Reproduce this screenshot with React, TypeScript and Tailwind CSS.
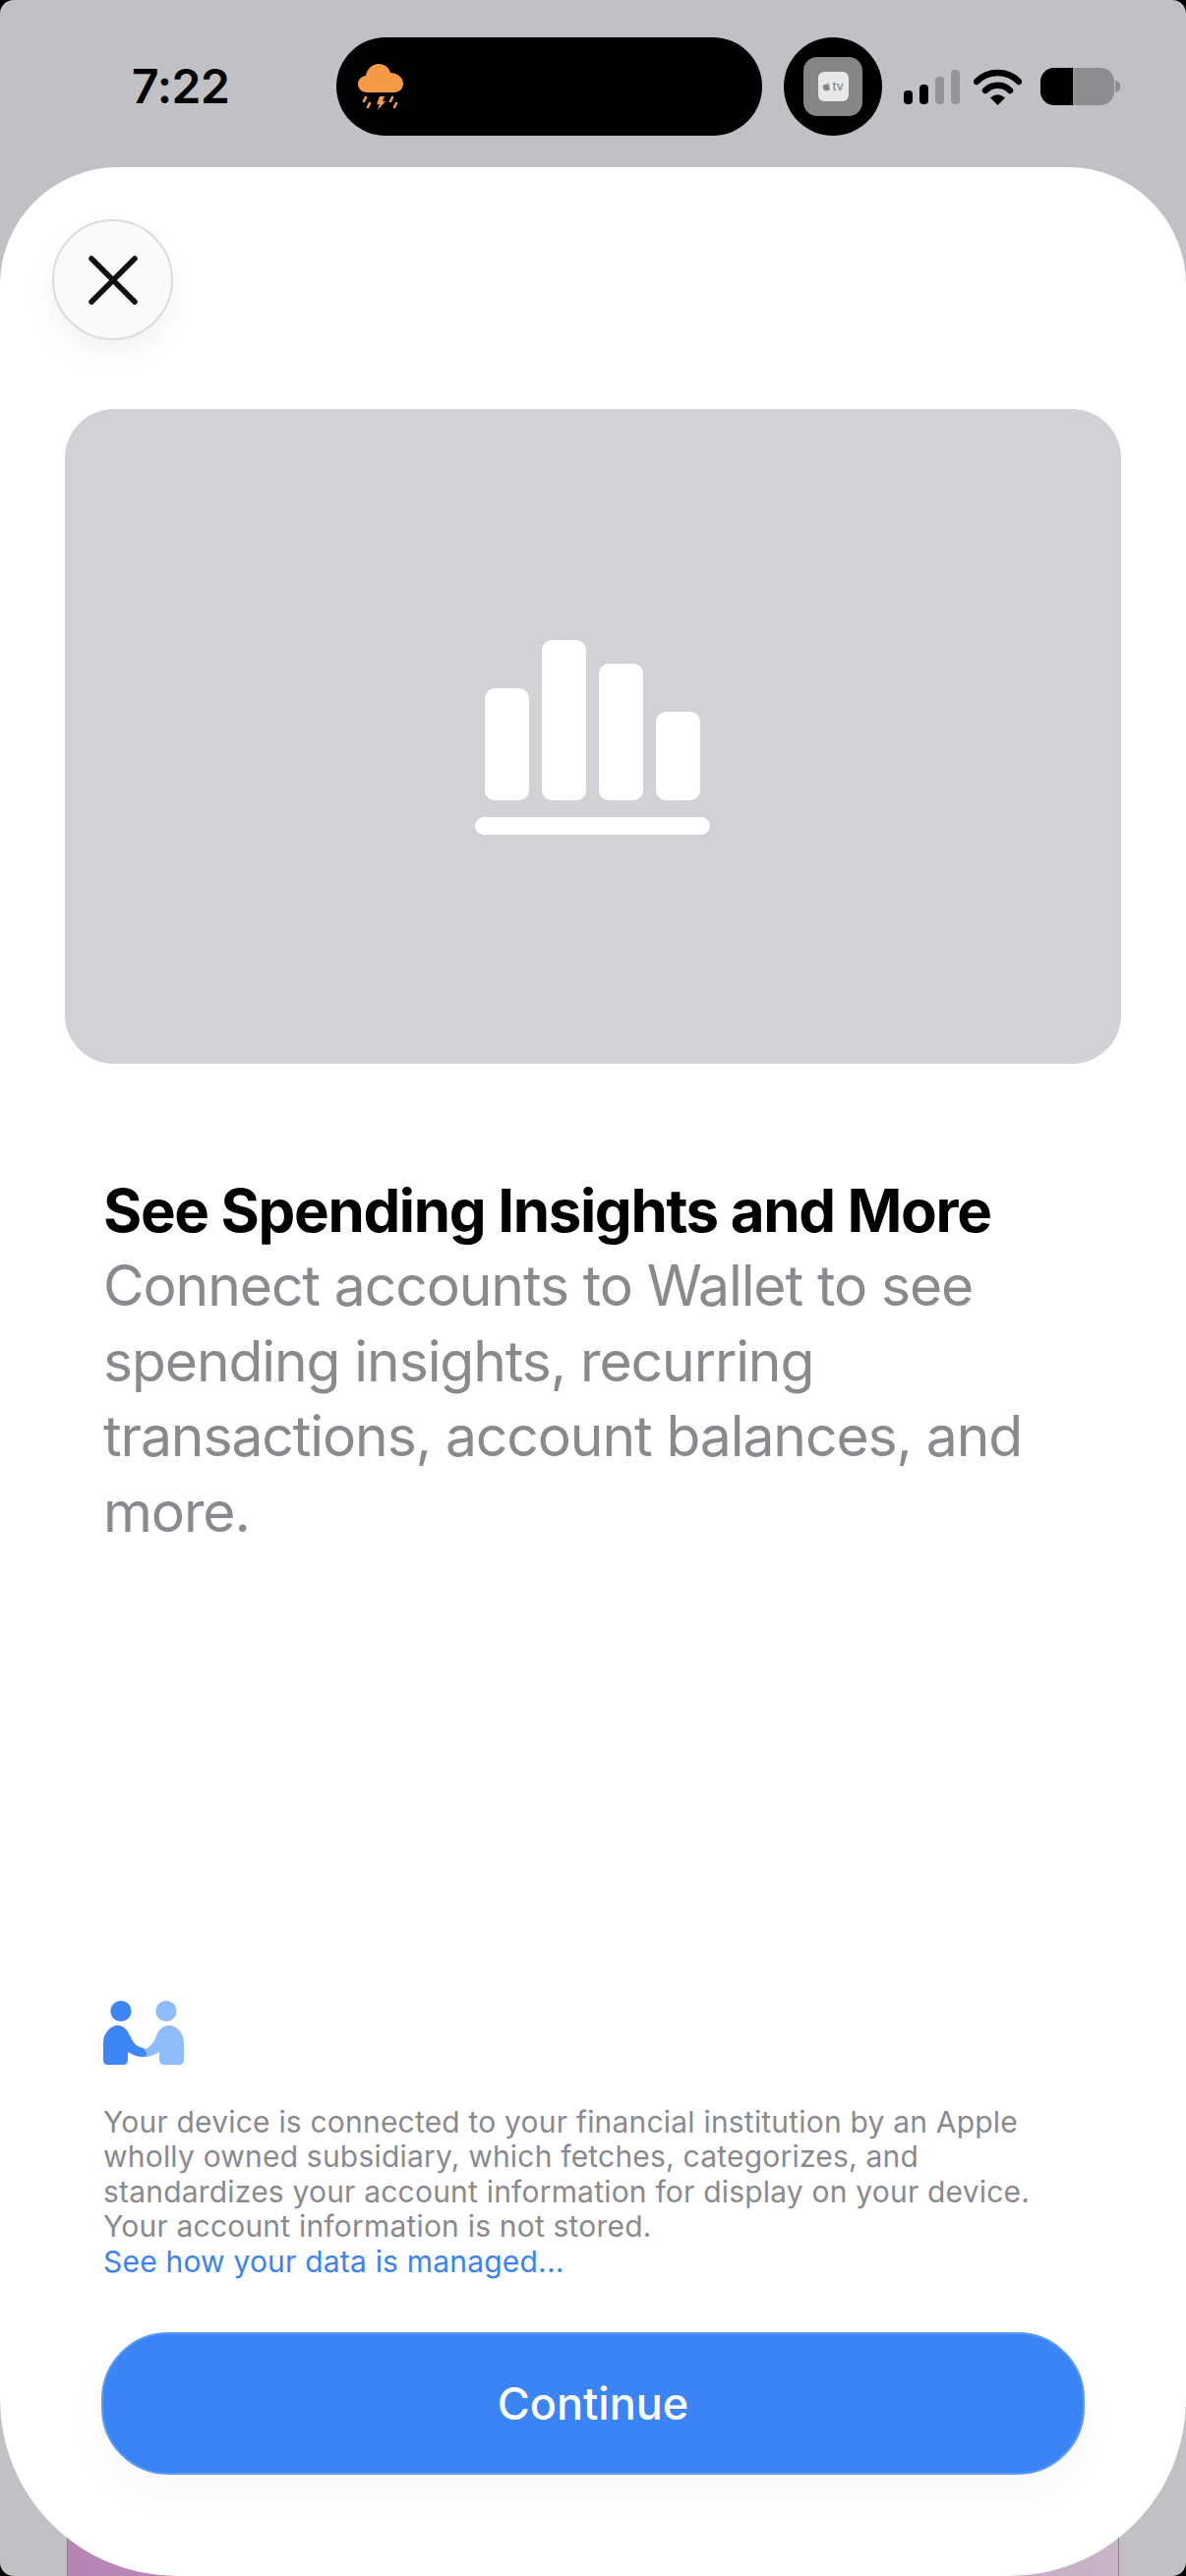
import React from "react";
import { FaApple } from "react-icons/fa";

const WeatherIcon = () => (
  <svg width="46" height="48" viewBox="0 0 46 48" fill="#f59b45" className="ml-[22px] mt-[27px]">
    <path d="M9 29C4 29 0 25 0 20.5C0 16 3.5 12.5 8 12C9 5 14.5 0 21 0C27 0 31.5 3.5 33 9C40 9 46 14 46 20C46 25 42 29 37 29Z" />
    <path d="M22 33H27L25 38H28L20 47L22 41H19Z" />
    <path d="M8 34L6 38M12 40L10 44M35 34L33 38M39 40L37 44" stroke="#f59b45" strokeWidth="2.6" strokeLinecap="round" fill="none" />
  </svg>
);

const SignalBars = () => (
  <div className="flex items-end gap-[7px] h-[35px]">
    <div className="w-[9px] h-[14px] rounded-[4px] bg-black" />
    <div className="w-[9px] h-[20px] rounded-[4px] bg-black" />
    <div className="w-[9px] h-[28px] rounded-[4px] bg-[#959598]" />
    <div className="w-[9px] h-[35px] rounded-[4px] bg-[#959598]" />
  </div>
);

const WifiIcon = () => (
  <svg width="49" height="37" viewBox="0 0 49 37" fill="none" stroke="black" strokeWidth="6.5" strokeLinecap="round">
    <path d="M3 13C15 1 34 1 46 13" />
    <path d="M12 22C19 15 30 15 37 22" />
    <path d="M17 29.5Q24.5 23 32 29.5L24.5 37Z" fill="black" stroke="none" />
  </svg>
);

const Battery = () => (
  <div className="flex items-center">
    <div className="flex w-[75px] h-[38px] rounded-[14px] overflow-hidden">
      <div className="w-[33px] bg-black" />
      <div className="flex-1 bg-[#8e8e90]" />
    </div>
    <div className="ml-[1px] w-[5px] h-[12px] rounded-r-full bg-[#8e8e90]" />
  </div>
);

const StatusBar = () => (
  <div className="h-[170px] flex items-start pt-[38px] relative">
    <div className="w-[134px]" />
    <div className="w-[208px] h-[100px] flex items-center font-['Inter',sans-serif] font-semibold text-[48px] tracking-[-0.4px] text-black leading-none">
      7:22
    </div>
    <div className="w-[433px] h-[100px] rounded-[50px] bg-black">
      <WeatherIcon />
    </div>
    <div className="ml-[22px] w-[100px] h-[100px] rounded-full bg-black flex items-center justify-center">
      <div className="w-[60px] h-[60px] rounded-[14px] bg-[#858585] flex items-center justify-center">
        <div className="w-[31px] h-[30px] rounded-[6px] bg-[#e8e8e8] flex items-center justify-center gap-[1px] text-[#858585]">
          <FaApple className="w-[9px] h-[10px]" />
          <span className="font-['Inter',sans-serif] font-medium text-[12px] leading-none">tv</span>
        </div>
      </div>
    </div>
    <div className="ml-[22px] h-[100px] flex items-center gap-[14px]">
      <SignalBars />
      <WifiIcon />
      <div className="ml-[5px]">
        <Battery />
      </div>
    </div>
  </div>
);

const ChartIcon = () => (
  <svg width="240" height="199" viewBox="0 0 240 199" fill="white">
    <rect x="10" y="49" width="45" height="114" rx="10" />
    <rect x="68" y="0" width="45" height="163" rx="10" />
    <rect x="126" y="24" width="45" height="139" rx="10" />
    <rect x="184" y="73" width="45" height="90" rx="10" />
    <rect x="0" y="180" width="239" height="18" rx="9" />
  </svg>
);

const PrivacyIcon = () => (
  <svg width="82" height="66" viewBox="0 0 82 66">
    <circle cx="64" cy="11.5" r="10.6" fill="#8fbcfa" />
    <path
      d="M67 26C74 26 82 33 82 44V61C82 64 80 66 77 66H61C59 66 57 64 57 61V53C52 56 47 58 42 58L38 52C45 50 50 46 53 39C56 31 60 26 67 26Z"
      fill="#8fbcfa"
    />
    <circle cx="18" cy="11.5" r="10.6" fill="#3e85f6" />
    <path
      d="M15 26C8 26 0 33 0 44V61C0 64 2 66 5 66H21C23 66 25 64 25 61V53C30 56 35 58 40 58C43 58 44 56 44 54L41 49C35 48 31 45 28 38C25 31 21 26 15 26Z"
      fill="#3e85f6"
    />
  </svg>
);

const App = () => {
  return (
    <div className="w-[1206px] h-[2620px] bg-black overflow-hidden font-['Inter',sans-serif]">
      <div className="relative w-full h-full rounded-[14px] bg-[#c1c0c5] flex flex-col overflow-hidden">
        <StatusBar />

        {/* card peeking out under the sheet */}
        <div className="absolute left-[68px] right-[68px] bottom-0 h-[80px] border-x border-[#8d7f8d] bg-gradient-to-r from-[#b884b4] via-[#b78fb8] to-[#c8b4c8]" />

        <div className="relative flex-1 flex flex-col bg-white rounded-t-[120px] rounded-b-[180px]">
          <button className="ml-[53px] mt-[53px] w-[123px] h-[123px] rounded-full bg-[#fafafa] border-2 border-[#dcdcdc] shadow-[0_14px_28px_rgba(0,0,0,0.05)] flex items-center justify-center">
            <svg width="50" height="50" viewBox="0 0 50 50" stroke="#111" strokeWidth="5.5" strokeLinecap="round">
              <path d="M3 3L47 47M47 3L3 47" />
            </svg>
          </button>

          <div className="ml-[66px] mr-[66px] mt-[70px] h-[666px] rounded-[50px] bg-[#d1d1d6] flex items-center justify-center pt-[3px]">
            <ChartIcon />
          </div>

          <div className="mt-[111px] px-[105px] leading-[76.8px]">
            <h1 className="text-[60px] font-bold text-black tracking-[-1.35px]">See Spending Insights and More</h1>
            <p className="text-[57px] text-[#8a8a8e] tracking-[-1.1px]">
              Connect accounts to Wallet to see
              <br />
              spending insights, recurring
              <br />
              transactions, account balances, and
              <br />
              more.
            </p>
          </div>

          <div className="flex-1" />

          <div className="ml-[105px]">
            <PrivacyIcon />
          </div>

          <p className="mt-[41px] px-[105px] text-[30px] leading-[35.4px] tracking-[0.2px] text-[#8a8a8e]">
            Your device is connected to your financial institution by an Apple
            <br />
            wholly owned subsidiary, which fetches, categorizes, and
            <br />
            standardizes your account information for display on your device.
            <br />
            Your account information is not stored.
            <br />
            <span className="text-[#3a82f6]">See how your data is managed...</span>
          </p>

          <button className="mt-[54px] mb-[103px] mx-[103px] h-[145px] rounded-[68px] bg-[#3b84f5] border-2 border-[#5a9cf7] shadow-[0_20px_40px_rgba(60,60,120,0.03)] flex items-center justify-center text-white text-[45px] font-medium">
            Continue
          </button>
        </div>
      </div>
    </div>
  );
};

export default App;
